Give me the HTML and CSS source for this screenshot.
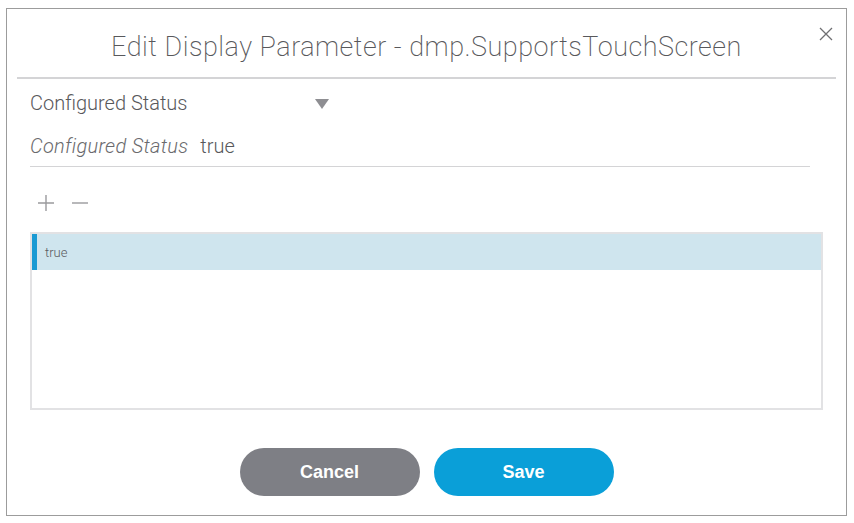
FILE: index.html
```html
<!DOCTYPE html>
<html>
<head>
<meta charset="utf-8">
<link rel="stylesheet" href="styles.css">
</head>
<body>
<div class="dialog">
  <div class="header">
    <h1 class="title">Edit Display Parameter - dmp.SupportsTouchScreen</h1>
    <span class="close">
      <svg width="14" height="14" viewBox="0 0 14 14"><path d="M1 1L13 13M13 1L1 13" stroke="#6f6f72" stroke-width="1.3" fill="none"/></svg>
    </span>
  </div>
  <div class="body">
    <div class="select">
      <span class="select-label">Configured Status</span>
      <svg class="caret" width="14" height="10" viewBox="0 0 14 10"><path d="M0 0H14L7 10Z" fill="#8e8e92"/></svg>
    </div>
    <div class="field">
      <span class="field-label">Configured Status</span>
      <span class="field-value">true</span>
    </div>
    <div class="tools">
      <svg width="20" height="20" viewBox="0 0 20 20"><path d="M10 2V18M2 10H18" stroke="#9a9a9d" stroke-width="1.4"/></svg>
      <svg width="20" height="20" viewBox="0 0 20 20"><path d="M2 10H18" stroke="#9a9a9d" stroke-width="1.4"/></svg>
    </div>
    <div class="list">
      <div class="row selected">true</div>
    </div>
  </div>
  <div class="footer">
    <button class="btn cancel">Cancel</button>
    <button class="btn save">Save</button>
  </div>
</div>
</body>
</html>
```
FILE: styles.css
```css
html, body {
  margin: 0;
  padding: 0;
  background: #fff;
}
body {
  padding: 8px 7px 7px 6px;
  font-family: Roboto, "Liberation Sans", sans-serif;
  font-weight: 300;
  color: #58585b;
}
.dialog {
  box-sizing: border-box;
  width: 841px;
  height: 508px;
  border: 1px solid #9c9c9c;
  display: flex;
  flex-direction: column;
  position: relative;
}
.header {
  margin: 0 10px 0 10px;
  height: 68px;
  border-bottom: 2px solid #d4d4d6;
  display: flex;
  align-items: center;
  justify-content: center;
}
.title {
  margin: 8px 0 0 0;
  font-size: 27px;
  font-weight: 200;
  color: #58585b;
  letter-spacing: 0.5px;
}
.close {
  position: absolute;
  right: 13px;
  top: 18px;
  display: flex;
}
.body {
  padding: 0 23px 0 23px;
  flex: 1;
}
.select {
  display: flex;
  align-items: center;
  height: 34px;
  margin-top: 7px;
}
.select-label {
  font-size: 20px;
  width: 285px;
  color: #58585b;
}
.caret {
  margin-top: 1px;
}
.field {
  width: 780px;
  height: 41px;
  display: flex;
  align-items: center;
  border-bottom: 1px solid #d4d4d6;
  margin-top: 5px;
  font-size: 20px;
}
.field-label {
  font-style: italic;
  color: #6a6a6d;
  margin-right: 12px;
  letter-spacing: 0.3px;
}
.field-value {
  color: #58585b;
}
.tools {
  display: flex;
  gap: 14px;
  margin: 26px 0 0 6px;
  height: 20px;
}
.list {
  margin-top: 19px;
  width: 793px;
  height: 178px;
  box-sizing: border-box;
  border: 2px solid #e2e2e4;
}
.row {
  height: 36px;
  display: flex;
  align-items: center;
  font-size: 13px;
  padding-left: 12px;
  color: #5a5a5d;
}
.row.selected {
  background: #cfe5ee;
  border-left: 5px solid #1a9ad3;
  padding-left: 8px;
}
.footer {
  display: flex;
  justify-content: center;
  gap: 14px;
  padding: 0 0 19px 0;
}
.btn {
  width: 180px;
  height: 48px;
  border: none;
  border-radius: 24px;
  color: #fff;
  font-family: "Liberation Sans", Arial, sans-serif;
  font-size: 18px;
  font-weight: bold;
}
.cancel {
  background: #7e7f85;
}
.save {
  background: #0a9fd8;
}
```
